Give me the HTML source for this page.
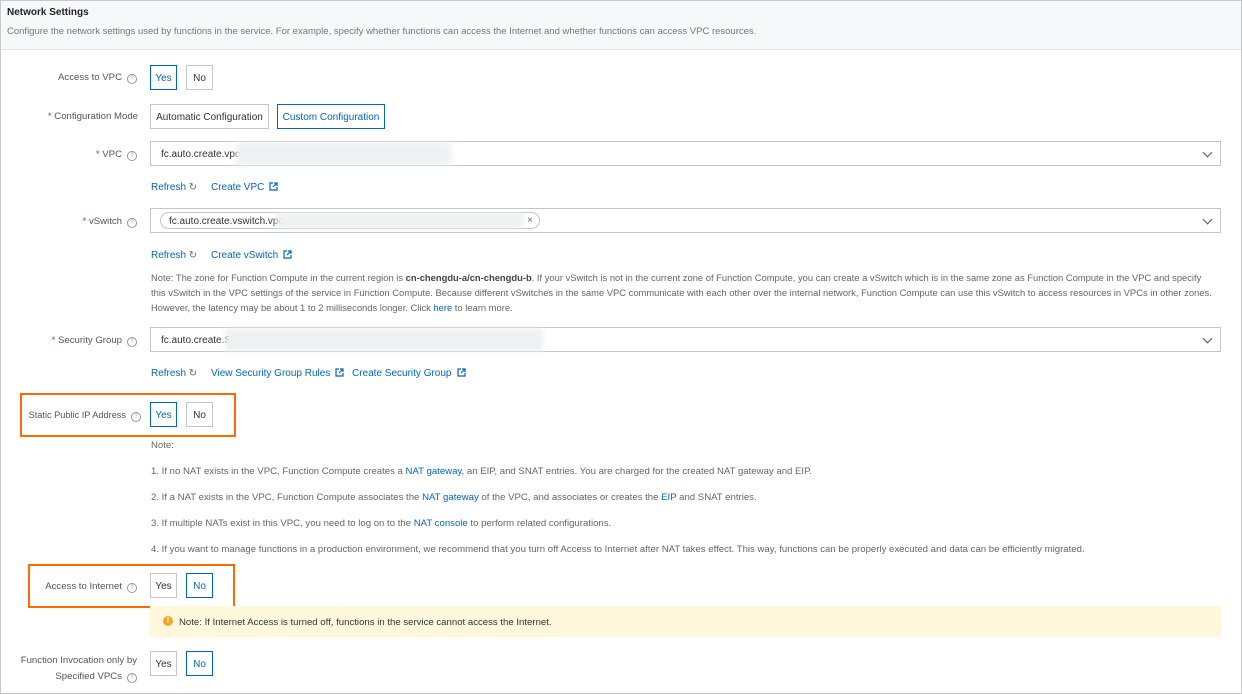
<!DOCTYPE html>
<html><head><style>
body{margin:0;width:1242px;height:694px;position:relative;font-family:"Liberation Sans",sans-serif;font-size:10px;color:#333;background:#fff;overflow:hidden}
.a{position:absolute;white-space:nowrap}
.frame{position:absolute;left:0;top:0;width:1240px;height:692px;border:1px solid #c8c8c8}
.hdr{position:absolute;left:1px;top:1px;width:1240px;height:48px;background:#f7f8fa;border-bottom:1px solid #e5e5e5}
.btn{position:absolute;border:1px solid #c4c6cc;background:#fff;line-height:25px;text-align:center;color:#333;box-sizing:border-box;height:25px}
.on{border-color:#0064c8;color:#0064c8}
.lbl{position:absolute;text-align:right;color:#555;white-space:nowrap;font-size:9.6px}
.q{display:inline-block;width:8px;height:8px;border:1px solid #999;border-radius:50%;font-size:6px;line-height:8px;text-align:center;color:#999;margin-left:5px;vertical-align:0px}
.r{color:#d93026}
.sel{position:absolute;left:150px;width:1071px;height:25px;border:1px solid #c4c6cc;box-sizing:border-box}
.chev{position:absolute;right:9px;top:7px;width:6px;height:6px;border-right:1px solid #555;border-bottom:1px solid #555;transform:rotate(45deg)}
.lk{color:#0064c8}
.g{color:#666}
.blur{position:absolute;background:#eef0f2;filter:blur(3px)}
.ob{position:absolute;border:2px solid #ff6a00}
.ext{margin-left:5px;vertical-align:-1px}
</style></head><body>
<svg width="0" height="0" style="position:absolute"><symbol id="e" viewBox="0 0 9 9"><path d="M4 1H1v7h7V5" fill="none" stroke="#0064c8" stroke-width="1.2"/><path d="M5 1h3v3M8 1L4 5" fill="none" stroke="#0064c8" stroke-width="1.2"/></symbol></svg>
<div class="frame"></div>
<div class="hdr"></div>
<div class="a" style="left:7px;top:7px;font-weight:bold;font-size:10px;color:#222">Network Settings</div>
<div class="a g" style="left:7px;top:26px;font-size:9.5px;color:#777">Configure the network settings used by functions in the service. For example, specify whether functions can access the Internet and whether functions can access VPC resources.</div>

<div class="lbl" style="right:1105px;top:72px">Access to VPC<span class="q">?</span></div>
<div class="btn on" style="left:150px;top:65px;width:27px">Yes</div>
<div class="btn" style="left:186px;top:65px;width:27px">No</div>

<div class="lbl" style="right:1104px;top:111px"><span class="r">* </span>Configuration Mode</div>
<div class="btn" style="left:150px;top:104px;width:119px">Automatic Configuration</div>
<div class="btn on" style="left:277px;top:104px;width:108px">Custom Configuration</div>

<div class="lbl" style="right:1105px;top:149px"><span class="r">* </span>VPC<span class="q">?</span></div>
<div class="sel" style="top:141px"><span class="a" style="left:10px;top:7px">fc.auto.create.vpc.</span><div class="chev"></div></div>
<div class="blur" style="left:236px;top:143px;width:215px;height:22px"></div>
<div class="a lk" style="left:151px;top:182px">Refresh <span class="g">↻</span></div>
<div class="a lk" style="left:211px;top:182px">Create VPC<svg class="ext" width="9" height="9"><use href="#e"/></svg></div>

<div class="lbl" style="right:1105px;top:216px"><span class="r">* </span>vSwitch<span class="q">?</span></div>
<div class="sel" style="top:208px"><div class="chev"></div></div>
<div class="a" style="left:160px;top:212px;width:380px;height:17px;border:1px solid #c4c6cc;border-radius:9px;box-sizing:border-box"><span class="a" style="left:8px;top:3px">fc.auto.create.vswitch.vpc-</span><span class="a" style="right:6px;top:2px;color:#666">×</span></div>
<div class="blur" style="left:276px;top:213px;width:248px;height:15px"></div>
<div class="a lk" style="left:151px;top:250px">Refresh <span class="g">↻</span></div>
<div class="a lk" style="left:211px;top:250px">Create vSwitch<svg class="ext" width="9" height="9"><use href="#e"/></svg></div>
<div class="a g" style="left:151px;top:270px;line-height:15px;font-size:9.4px;color:#666">Note: The zone for Function Compute in the current region is <b style="color:#444">cn-chengdu-a/cn-chengdu-b</b>. If your vSwitch is not in the current zone of Function Compute, you can create a vSwitch which is in the same zone as Function Compute in the VPC and specify<br>this vSwitch in the VPC settings of the service in Function Compute. Because different vSwitches in the same VPC communicate with each other over the internal network, Function Compute can use this vSwitch to access resources in VPCs in other zones.<br>However, the latency may be about 1 to 2 milliseconds longer. Click <span class="lk">here</span> to learn more.</div>

<div class="lbl" style="right:1105px;top:335px"><span class="r">* </span>Security Group<span class="q">?</span></div>
<div class="sel" style="top:327px"><span class="a" style="left:10px;top:7px">fc.auto.create.S</span><div class="chev"></div></div>
<div class="blur" style="left:225px;top:329px;width:318px;height:22px"></div>
<div class="a lk" style="left:151px;top:368px">Refresh <span class="g">↻</span></div>
<div class="a lk" style="left:211px;top:368px">View Security Group Rules<svg class="ext" width="9" height="9"><use href="#e"/></svg></div>
<div class="a lk" style="left:352px;top:368px">Create Security Group<svg class="ext" width="9" height="9"><use href="#e"/></svg></div>

<div class="ob" style="left:20px;top:393px;width:212px;height:40px"></div>
<div class="lbl" style="right:1101px;top:410px;font-size:9.2px">Static Public IP Address<span class="q">?</span></div>
<div class="btn on" style="left:150px;top:402px;width:27px">Yes</div>
<div class="btn" style="left:186px;top:402px;width:27px">No</div>

<div class="a g" style="left:151px;top:440px;font-size:9.6px">Note:</div>
<div class="a g" style="left:151px;top:466px;font-size:9.6px">1. If no NAT exists in the VPC, Function Compute creates a <span class="lk">NAT gateway</span>, an EIP, and SNAT entries. You are charged for the created NAT gateway and EIP.</div>
<div class="a g" style="left:151px;top:492px;font-size:9.6px">2. If a NAT exists in the VPC, Function Compute associates the <span class="lk">NAT gateway</span> of the VPC, and associates or creates the <span class="lk">EIP</span> and SNAT entries.</div>
<div class="a g" style="left:151px;top:518px;font-size:9.6px">3. If multiple NATs exist in this VPC, you need to log on to the <span class="lk">NAT console</span> to perform related configurations.</div>
<div class="a g" style="left:151px;top:544px;font-size:9.6px">4. If you want to manage functions in a production environment, we recommend that you turn off Access to Internet after NAT takes effect. This way, functions can be properly executed and data can be efficiently migrated.</div>

<div class="ob" style="left:28px;top:564px;width:203px;height:40px"></div>
<div class="lbl" style="right:1105px;top:581px">Access to Internet<span class="q">?</span></div>
<div class="btn" style="left:150px;top:573px;width:27px">Yes</div>
<div class="btn on" style="left:186px;top:573px;width:27px">No</div>

<div class="a" style="left:150px;top:606px;width:1071px;height:31px;background:#fff8dc"></div>
<div class="a" style="left:163px;top:616px;width:10px;height:10px;border-radius:50%;background:#f5a623;color:#fff;font-size:8px;line-height:10px;text-align:center;font-weight:bold">!</div>
<div class="a" style="left:179px;top:617px;font-size:9.6px">Note: If Internet Access is turned off, functions in the service cannot access the Internet.</div>

<div class="lbl" style="right:1105px;top:653px;line-height:16px">Function Invocation only by<br>Specified VPCs<span class="q">?</span></div>
<div class="btn" style="left:150px;top:651px;width:27px">Yes</div>
<div class="btn on" style="left:186px;top:651px;width:27px">No</div>
</body></html>
